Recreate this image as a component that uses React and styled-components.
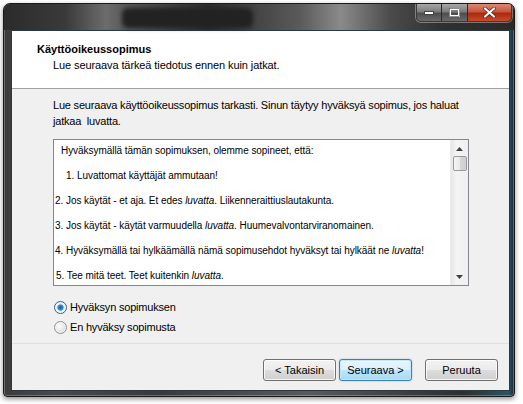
import React from "react";
import styled, { createGlobalStyle, css } from "styled-components";

const GlobalStyle = createGlobalStyle`
  html, body {
    margin: 0;
    padding: 0;
    background: #ffffff;
  }
  body {
    font-family: "Liberation Sans", Arial, sans-serif;
    font-size: 11px;
    color: #000;
  }
`;

const Desktop = styled.div`
  width: 523px;
  height: 404px;
  padding: 3px 0 0 3px;
  box-sizing: border-box;
`;

const Window = styled.div`
  width: 512px;
  height: 394px;
  box-sizing: border-box;
  border: 1px solid #1a1a1a;
  border-radius: 7px 7px 4px 4px;
  display: flex;
  flex-direction: column;
  background: linear-gradient(
    90deg,
    #3c3c3c 0%,
    #4a4a4a 10%,
    #3a3a3a 30%,
    #5a5a5a 60%,
    #2e2e2e 90%,
    #2a5466 99%,
    #1c2c34 100%
  );
  box-shadow: 0 2px 5px rgba(0, 0, 0, 0.45), inset 0 0 0 1px rgba(255, 255, 255, 0.25);
  overflow: hidden;
`;

const TitleBar = styled.div`
  height: 26px;
  display: flex;
  align-items: flex-start;
  padding-right: 2px;
  background: linear-gradient(
    90deg,
    #2b2b2b 0%,
    #3a3a3a 12%,
    #6c6c6c 20%,
    #575757 24%,
    #2c2c2c 40%,
    #5a5a5a 58%,
    #8a8a8a 66%,
    #4a4a4a 76%,
    #303030 86%,
    #2a2a2a 100%
  );
`;

const HiddenTitle = styled.div`
  margin: 4px 0 0 118px;
  width: 131px;
  height: 20px;
  border-radius: 6px;
  background: #222;
  filter: blur(2px);
`;

const Caption = styled.div`
  margin-left: auto;
  display: flex;
  height: 17px;
  border: 1px solid #3b3b3b;
  border-top: none;
  border-radius: 0 0 5px 5px;
  overflow: hidden;
  box-shadow: 0 0 0 1px rgba(255, 255, 255, 0.35);
`;

const CapButton = styled.div`
  width: ${(p) => p.$w}px;
  display: flex;
  align-items: center;
  justify-content: center;
  border-right: 1px solid #2c2c2c;
  &:last-child {
    border-right: none;
  }
  ${(p) =>
    p.$close
      ? css`
          background: linear-gradient(180deg, #d88a76 0%, #c8573c 45%, #a82a10 55%, #c94a2a 100%);
        `
      : css`
          background: linear-gradient(180deg, #a8a8a8 0%, #7c7c7c 45%, #4e4e4e 55%, #6a6a6a 100%);
        `}
`;

const Client = styled.div`
  flex: 1;
  margin: 0 4px 5px 7px;
  border: 1px solid #2b3940;
  display: flex;
  flex-direction: column;
  background: #f0f0f0;
`;

const Header = styled.div`
  height: 58px;
  background: #ffffff;
  border-bottom: 1px solid #a0a0a0;
  padding: 11px 0 0 25px;
  box-sizing: border-box;
`;

const Title = styled.div`
  font-weight: bold;
  font-size: 11px;
  line-height: 14px;
`;

const Subtitle = styled.div`
  margin: 2px 0 0 16px;
  font-size: 11px;
  letter-spacing: -0.1px;
  line-height: 15px;
`;

const Body = styled.div`
  flex: 1;
  padding: 8px 0 0 41px;
`;

const Intro = styled.p`
  margin: 0;
  font-size: 11px;
  letter-spacing: -0.2px;
  line-height: 16px;
  white-space: pre;
`;

const LicenseBox = styled.div`
  margin-top: 10px;
  width: 416px;
  height: 147px;
  box-sizing: border-box;
  border: 1px solid #828790;
  background: #ffffff;
  display: flex;
`;

const LicenseText = styled.div`
  flex: 1;
  padding-top: 4px;
  font-size: 10px;
  letter-spacing: -0.05px;
  overflow: hidden;
`;

const Item = styled.div`
  line-height: 14px;
  margin-bottom: 11px;
  padding-left: ${(p) => p.$indent}px;
  white-space: nowrap;
  em {
    font-style: italic;
  }
`;

const ScrollBar = styled.div`
  width: 17px;
  display: flex;
  flex-direction: column;
  align-items: center;
  background: linear-gradient(90deg, #e6e6e6 0%, #f4f4f4 30%, #f0f0f0 100%);
  border-left: 1px solid #ececec;
`;

const ArrowBox = styled.div`
  height: 17px;
  width: 17px;
  display: flex;
  align-items: center;
  justify-content: center;
`;

const Thumb = styled.div`
  width: 14px;
  height: 15px;
  margin-top: -1px;
  box-sizing: border-box;
  border: 1px solid #9a9a9a;
  border-radius: 2px;
  background: linear-gradient(90deg, #f6f6f6 0%, #e8e8e8 50%, #d6d6d6 51%, #cfcfcf 100%);
`;

const Track = styled.div`
  flex: 1;
`;

const Choices = styled.div`
  margin: 11px 0 0 1px;
  display: flex;
  flex-direction: column;
`;

const Choice = styled.label`
  height: 20px;
  display: flex;
  align-items: center;
  gap: 3px;
  font-size: 11px;
  letter-spacing: -0.2px;
`;

const Radio = styled.span`
  width: 13px;
  height: 13px;
  box-sizing: border-box;
  border-radius: 50%;
  border: 1px solid ${(p) => (p.$checked ? "#2c628b" : "#8f8f8f")};
  background: ${(p) =>
    p.$checked
      ? "radial-gradient(circle, #1d5f92 0%, #3d8ed0 35%, #dcecf8 45%, #f4f4f4 100%)"
      : "radial-gradient(circle at 40% 40%, #fdfdfd 0%, #e4e4e4 55%, #cfcfcf 100%)"};
  box-shadow: inset 0 0 0 1px rgba(255, 255, 255, 0.7);
`;

const Footer = styled.div`
  height: 47px;
  box-sizing: border-box;
  border-top: 1px solid #dfdfdf;
  display: flex;
  justify-content: flex-end;
  align-items: flex-start;
  padding: 15px 11px 0 0;
`;

const Button = styled.button`
  width: 73px;
  height: 22px;
  margin-left: ${(p) => p.$gap || 0}px;
  padding: 0;
  font-family: "Liberation Sans", Arial, sans-serif;
  font-size: 11px;
  color: #000;
  border-radius: 3px;
  border: 1px solid #707070;
  background: linear-gradient(180deg, #f2f2f2 0%, #ebebeb 50%, #dddddd 51%, #cfcfcf 100%);
  box-shadow: inset 0 0 0 1px rgba(255, 255, 255, 0.8);
  ${(p) =>
    p.$default &&
    css`
      border-color: #3c7fb1;
      background: linear-gradient(180deg, #eaf6fd 0%, #d9f0fc 50%, #bee6fd 51%, #a7d9f5 100%);
      box-shadow: inset 0 0 0 1px #c4e8fa, 0 0 2px rgba(60, 127, 177, 0.4);
    `}
`;

const items = [
  { indent: 7, text: <>Hyväksymällä tämän sopimuksen, olemme sopineet, että:</> },
  { indent: 12, text: <>1. Luvattomat käyttäjät ammutaan!</> },
  { indent: 1, text: <>2. Jos käytät - et aja. Et edes <em>luvatta</em>. Liikenneraittiuslautakunta.</> },
  { indent: 1, text: <>3. Jos käytät - käytät varmuudella <em>luvatta</em>. Huumevalvontarviranomainen.</> },
  { indent: 1, text: <>4. Hyväksymällä tai hylkäämällä nämä sopimusehdot hyväksyt tai hylkäät ne <em>luvatta</em>!</> },
  { indent: 2, text: <>5. Tee mitä teet. Teet kuitenkin <em>luvatta</em>.</> },
];

export default function App() {
  return (
    <>
      <GlobalStyle />
      <Desktop>
        <Window>
          <TitleBar>
            <HiddenTitle />
            <Caption>
              <CapButton $w={24}>
                <svg width="10" height="4" viewBox="0 0 10 4">
                  <rect x="0.5" y="0.5" width="9" height="3" fill="#fff" stroke="#444" strokeWidth="1" />
                </svg>
              </CapButton>
              <CapButton $w={25}>
                <svg width="11" height="9" viewBox="0 0 11 9">
                  <rect x="1" y="1" width="9" height="7" fill="none" stroke="#fff" strokeWidth="2" />
                  <rect x="0.5" y="0.5" width="10" height="8" fill="none" stroke="#444" strokeWidth="0.6" />
                </svg>
              </CapButton>
              <CapButton $w={43} $close>
                <svg width="13" height="11" viewBox="0 0 13 11">
                  <path d="M2 1.5 L11 9.5 M11 1.5 L2 9.5" stroke="#6a1a0a" strokeWidth="3.6" strokeLinecap="round" />
                  <path d="M2 1.5 L11 9.5 M11 1.5 L2 9.5" stroke="#fff" strokeWidth="2.2" strokeLinecap="round" />
                </svg>
              </CapButton>
            </Caption>
          </TitleBar>
          <Client>
            <Header>
              <Title>Käyttöoikeussopimus</Title>
              <Subtitle>Lue seuraava tärkeä tiedotus ennen kuin jatkat.</Subtitle>
            </Header>
            <Body>
              <Intro>
                {"Lue seuraava käyttöoikeussopimus tarkasti. Sinun täytyy hyväksyä sopimus, jos haluat\njatkaa  luvatta."}
              </Intro>
              <LicenseBox>
                <LicenseText>
                  {items.map((it, i) => (
                    <Item key={i} $indent={it.indent}>
                      {it.text}
                    </Item>
                  ))}
                </LicenseText>
                <ScrollBar>
                  <ArrowBox>
                    <svg width="7" height="4" viewBox="0 0 7 4">
                      <path d="M0 4 L3.5 0 L7 4 Z" fill="#404040" />
                    </svg>
                  </ArrowBox>
                  <Thumb />
                  <Track />
                  <ArrowBox>
                    <svg width="7" height="4" viewBox="0 0 7 4">
                      <path d="M0 0 L3.5 4 L7 0 Z" fill="#404040" />
                    </svg>
                  </ArrowBox>
                </ScrollBar>
              </LicenseBox>
              <Choices>
                <Choice>
                  <Radio $checked />
                  Hyväksyn sopimuksen
                </Choice>
                <Choice>
                  <Radio />
                  En hyväksy sopimusta
                </Choice>
              </Choices>
            </Body>
            <Footer>
              <Button>&lt; Takaisin</Button>
              <Button $gap={3} $default>
                Seuraava &gt;
              </Button>
              <Button $gap={13}>Peruuta</Button>
            </Footer>
          </Client>
        </Window>
      </Desktop>
    </>
  );
}
